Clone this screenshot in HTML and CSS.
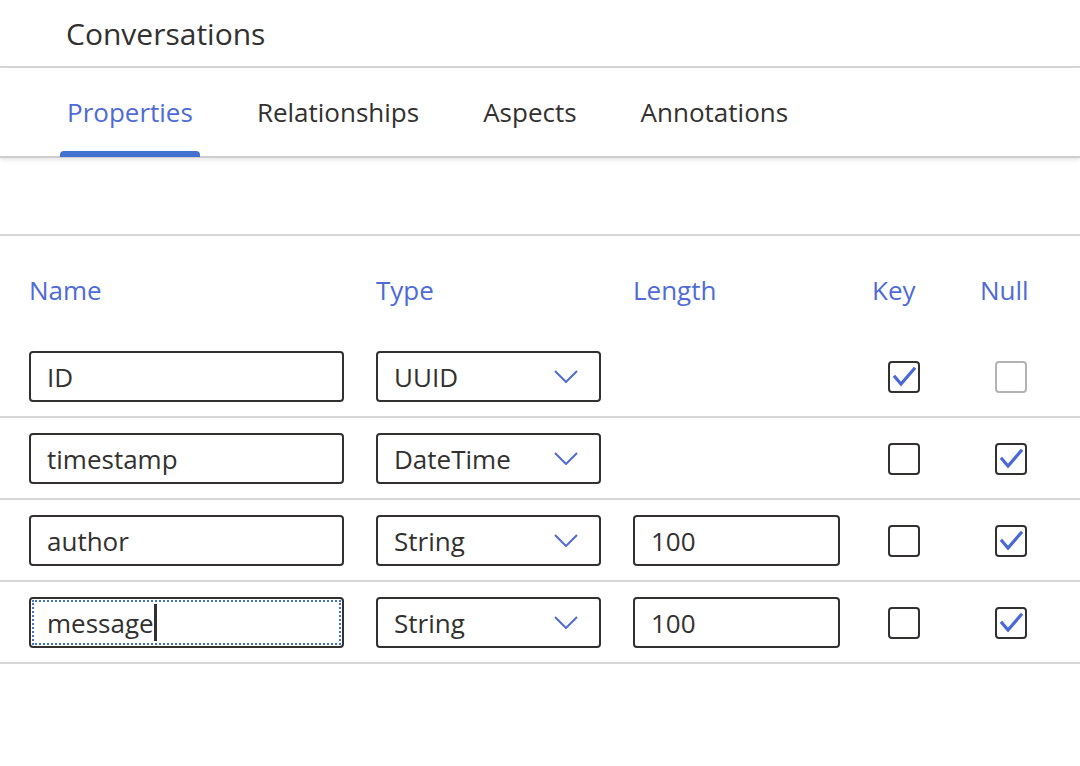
FILE: index.html
```html
<!DOCTYPE html>
<html lang="en">
<head>
<meta charset="utf-8">
<title>Conversations</title>
<link rel="stylesheet" href="styles.css">
</head>
<body>
<header class="title-bar"><h1 class="title">Conversations</h1></header>
<nav class="tabs">
  <div class="tab active">Properties</div>
  <div class="tab">Relationships</div>
  <div class="tab">Aspects</div>
  <div class="tab">Annotations</div>
</nav>
<div class="toolbar"></div>
<div class="table">
  <div class="head">
    <div>Name</div><div>Type</div><div>Length</div><div>Key</div><div>Null</div>
  </div>
  <div class="row">
    <div class="field">ID</div>
    <div class="field select">UUID<svg class="chev" viewBox="0 0 24 13"><path d="M1 1 L12 12 L23 1"/></svg></div>
    <div></div>
    <div class="cb-cell"><span class="cb"><svg viewBox="0 0 32 32"><path d="M7 16 L13 23 L26 8"/></svg></span></div>
    <div class="cb-cell"><span class="cb disabled"></span></div>
  </div>
  <div class="row">
    <div class="field">timestamp</div>
    <div class="field select">DateTime<svg class="chev" viewBox="0 0 24 13"><path d="M1 1 L12 12 L23 1"/></svg></div>
    <div></div>
    <div class="cb-cell"><span class="cb"></span></div>
    <div class="cb-cell"><span class="cb"><svg viewBox="0 0 32 32"><path d="M7 16 L13 23 L26 8"/></svg></span></div>
  </div>
  <div class="row">
    <div class="field">author</div>
    <div class="field select">String<svg class="chev" viewBox="0 0 24 13"><path d="M1 1 L12 12 L23 1"/></svg></div>
    <div class="field">100</div>
    <div class="cb-cell"><span class="cb"></span></div>
    <div class="cb-cell"><span class="cb"><svg viewBox="0 0 32 32"><path d="M7 16 L13 23 L26 8"/></svg></span></div>
  </div>
  <div class="row">
    <div class="field focused">message<span class="caret"></span></div>
    <div class="field select">String<svg class="chev" viewBox="0 0 24 13"><path d="M1 1 L12 12 L23 1"/></svg></div>
    <div class="field">100</div>
    <div class="cb-cell"><span class="cb"></span></div>
    <div class="cb-cell"><span class="cb"><svg viewBox="0 0 32 32"><path d="M7 16 L13 23 L26 8"/></svg></span></div>
  </div>
</div>
</body>
</html>
```

FILE: styles.css
```css
* { box-sizing: border-box; }
html, body { margin: 0; padding: 0; background: #fff; }
body {
  font-family: "Open Sans", "Noto Sans", sans-serif;
  color: #323130;
  width: 1080px;
  height: 766px;
  overflow: hidden;
}
.title-bar {
  height: 68px;
  border-bottom: 2px solid #d6d6d6;
  display: flex;
  align-items: center;
  padding-left: 66px;
}
.title {
  margin: 0;
  font-size: 30px;
  font-weight: 400;
  color: #323130;
}
.tabs {
  display: flex;
  gap: 50px;
  padding-left: 60px;
  height: 90px;
  border-bottom: 2px solid #cdcdcd;
  box-shadow: 0 2px 4px rgba(0,0,0,0.10);
  position: relative;
}
.tab {
  position: relative;
  padding: 0 7px;
  font-size: 26px;
  display: flex;
  align-items: center;
  color: #323130;
}
.tab.active { color: #4f6bd6; }
.tab.active::after {
  content: "";
  position: absolute;
  left: 0;
  right: 0;
  bottom: -1px;
  height: 6px;
  border-radius: 4px 4px 0 0;
  background: #4470d0;
}
.toolbar {
  height: 78px;
  border-bottom: 2px solid #d6d6d6;
}
.head, .row {
  display: grid;
  grid-template-columns: 315px 225px 207px 76px 1fr;
  column-gap: 32px;
  padding-left: 29px;
}
.head {
  height: 100px;
  align-items: center;
  padding-top: 8px;
  font-size: 26px;
  color: #4f6bd6;
}
.row {
  padding-top: 15px;
  padding-bottom: 14px;
  border-bottom: 2px solid #d6d6d6;
  align-items: center;
}
.field {
  height: 51px;
  border: 2px solid #323130;
  border-radius: 4px;
  display: flex;
  align-items: center;
  padding-left: 16px;
  font-size: 26px;
  color: #323130;
  position: relative;
}
.select {
  justify-content: space-between;
  padding-right: 21px;
}
.chev {
  width: 24px;
  height: 13px;
  fill: none;
  stroke: #4f6bd6;
  stroke-width: 2;
}
.focused {
  outline: 2px dotted #4470d0;
  outline-offset: -5px;
}
.caret {
  display: inline-block;
  width: 3px;
  height: 37px;
  background: #323130;
}
.cb-cell {
  display: flex;
  align-items: center;
}
.cb-cell:nth-child(4) { padding-left: 16px; }
.cb-cell:nth-child(5) { padding-left: 15px; }
.cb {
  width: 32px;
  height: 32px;
  border: 2px solid #323130;
  border-radius: 4px;
  display: block;
  position: relative;
}
.cb.disabled { border-color: #b3b3b3; }
.cb svg {
  position: absolute;
  left: -2px;
  top: -2px;
  width: 32px;
  height: 32px;
  fill: none;
  stroke: #4a68d6;
  stroke-width: 3.2;
  stroke-linecap: square;
}
```
